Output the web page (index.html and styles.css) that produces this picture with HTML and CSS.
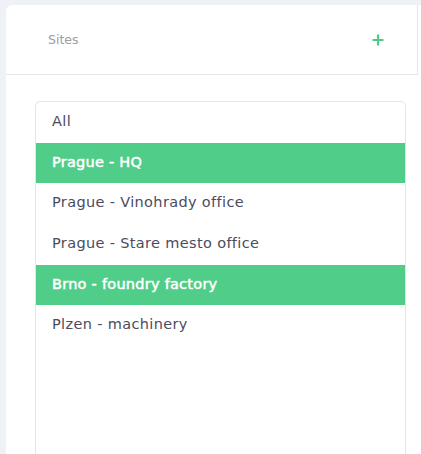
FILE: index.html
```html
<!DOCTYPE html>
<html>
<head>
<meta charset="utf-8">
<link rel="stylesheet" href="styles.css">
</head>
<body>
<div class="page">
  <div class="card">
    <div class="card-header">
      <span class="title">Sites</span>
      <svg class="plus" width="12" height="12" viewBox="0 0 12 12"><path d="M6 0.5V11.5M0.5 6H11.5" stroke="#4ecb87" stroke-width="2.2"/></svg>
    </div>
    <div class="card-body">
      <ul class="site-list">
        <li class="site">All</li>
        <li class="site active">Prague - HQ</li>
        <li class="site">Prague - Vinohrady office</li>
        <li class="site">Prague - Stare mesto office</li>
        <li class="site active">Brno - foundry factory</li>
        <li class="site">Plzen - machinery</li>
      </ul>
    </div>
  </div>
</div>
</body>
</html>
```
FILE: styles.css
```css
html, body {
  margin: 0;
  padding: 0;
  background: #eef1f5;
  overflow: hidden;
}
.page {
  height: 454px;
  box-sizing: border-box;
  padding: 5px 0 0 6px;
  overflow: hidden;
  font-family: "DejaVu Sans", "Open Sans", sans-serif;
}
.card {
  background: #fff;
  border-top-left-radius: 6px;
  width: 430px;
  height: 460px;
}
.card-header {
  box-sizing: border-box;
  width: 412px;
  height: 70px;
  border-right: 1px solid #e6e7ee;
  border-bottom: 1px solid #e6e7ee;
  display: flex;
  align-items: center;
  justify-content: space-between;
  padding: 0 33px 0 42px;
}
.title {
  font-size: 12.5px;
  color: #9c9ca8;
}
.plus {
  display: block;
}
.card-body {
  padding: 26px 0 0 29px;
}
.site-list {
  list-style: none;
  margin: 0;
  padding: 0;
  box-sizing: border-box;
  width: 371px;
  height: 400px;
  border: 1px solid #e3e4ec;
  border-radius: 5px;
  overflow: hidden;
}
.site {
  height: 40.65px;
  line-height: 38px;
  padding-left: 16px;
  font-size: 14.5px;
  letter-spacing: 0.35px;
  color: #4c4b60;
}
.site.active {
  background: #50cd88;
  color: #fff;
  -webkit-text-stroke: 0.5px #fff;
  letter-spacing: 0.25px;
}
```
